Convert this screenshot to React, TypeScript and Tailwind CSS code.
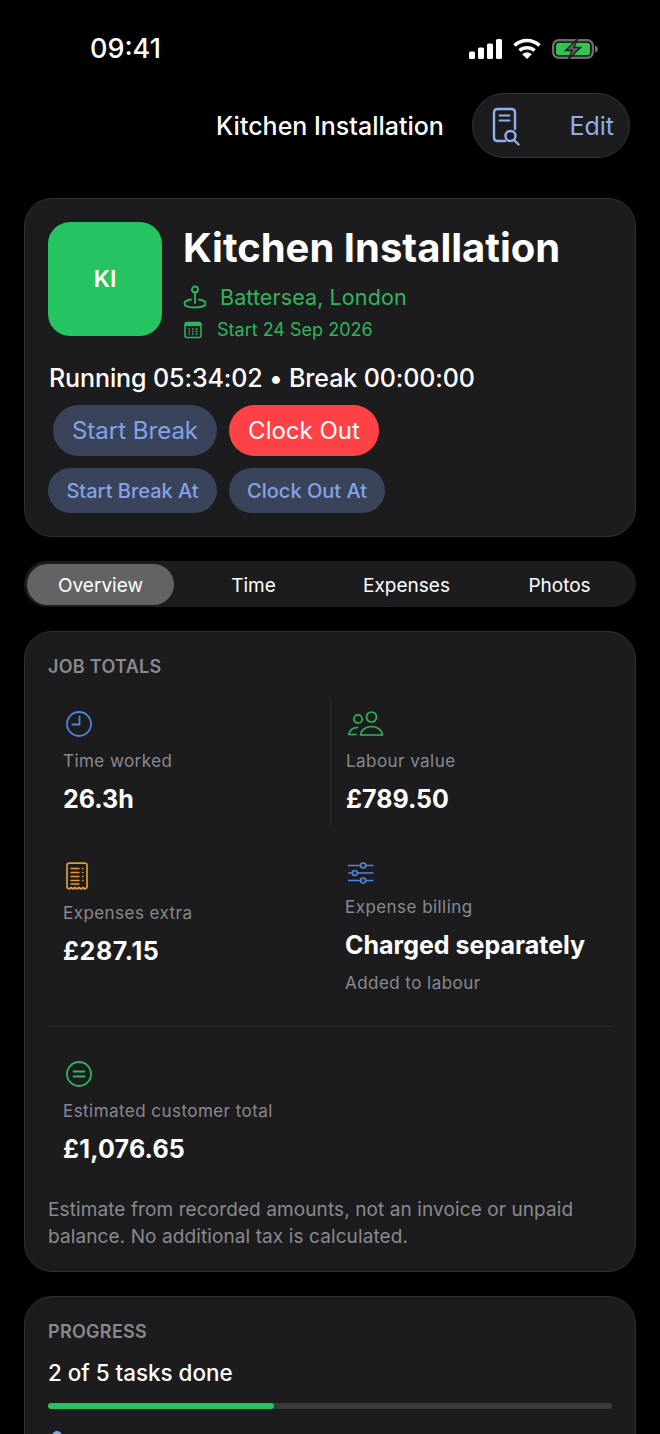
import React from 'react';

function Signal() {
  return (
    <svg width="33" height="20" viewBox="0 0 33 20" fill="white">
      <rect x="0" y="12.500" width="6" height="7.500" rx="1.500" />
      <rect x="9" y="8.500" width="6" height="11.500" rx="1.500" />
      <rect x="18" y="4.500" width="6" height="15.500" rx="1.500" />
      <rect x="27" y="0" width="6" height="20" rx="1.500" />
    </svg>
  );
}

function Wifi() {
  return (
    <svg width="28" height="21" viewBox="0 0 28 21" fill="none" stroke="white" strokeWidth="3.600">
      <path d="M1.500 7.500C8.500 0.800 19.500 0.800 26.500 7.500" />
      <path d="M6.500 12.500C10.800 8.800 17.200 8.800 21.500 12.500" />
      <path d="M14 21l-4.800-4.800c2.600-2.200 7-2.200 9.600 0z" fill="white" stroke="none" />
    </svg>
  );
}

function Battery() {
  return (
    <svg width="46" height="20" viewBox="0 0 46 20" fill="none">
      <rect x="1.200" y="1.200" width="39.600" height="17.600" rx="5.500" stroke="#6b6d6e" strokeWidth="2.400" />
      <rect x="4" y="3.800" width="34" height="12.400" rx="2.800" fill="#30c652" />
      <path d="M43 6.500v7c1.800-.5 3-1.900 3-3.500s-1.200-3-3-3.500z" fill="#6b6d6e" />
      <path d="M25.500 0L13.500 11.500H20L16.500 20L28.500 8.500H22z" fill="#5f6160" stroke="#1c1c1e" strokeWidth="1.400" />
    </svg>
  );
}

function DocSearch() {
  return (
    <svg width="32" height="40" viewBox="0 0 32 40" fill="none" stroke="#8fb0ee" strokeWidth="2.400" strokeLinecap="round">
      <path d="M13 34H5.500C3.500 34 2 32.500 2 30.500V5.500C2 3.500 3.500 2 5.500 2H19.500C21.500 2 23 3.500 23 5.500V22" />
      <path d="M7.500 8.500H17.500M7.500 13.500H17.500" strokeWidth="2" />
      <circle cx="18.500" cy="29" r="5" />
      <path d="M22 33l4.500 4.500" />
    </svg>
  );
}

function Pin() {
  return (
    <svg width="24" height="26" viewBox="0 0 24 26" fill="none" stroke="#2fb65c" strokeWidth="1.800" strokeLinecap="round">
      <circle cx="12" cy="5.500" r="3" />
      <path d="M12 8.500V19" />
      <path d="M8 15.500C4 16 1.500 17.500 1.500 19.500C1.500 22 6 23.500 12 23.500C18 23.500 22.500 22 22.500 19.500C22.500 17.500 20 16 16 15.500" />
    </svg>
  );
}

function CalendarGlyph() {
  return (
    <svg width="18" height="18" viewBox="0 0 18 18" fill="none">
      <rect x="1" y="1.500" width="16" height="15" rx="2" stroke="#2fb65c" strokeWidth="1.500" />
      <rect x="1" y="1.500" width="16" height="3.500" fill="#2fb65c" />
      <path d="M4.500 8h1.500M8 8h1.500M11.500 8h2M4.500 10.500h1.500M8 10.500h1.500M11.500 10.500h2M4.500 13h1.500M8 13h1.500M11.500 13h2" stroke="#2fb65c" strokeWidth="1.300" />
    </svg>
  );
}

function ClockIcon() {
  return (
    <svg width="28" height="28" viewBox="0 0 28 28" fill="none" stroke="#4f86dd" strokeWidth="1.800" strokeLinecap="round" strokeLinejoin="round">
      <circle cx="14" cy="14" r="12" />
      <path d="M14.500 6.500V14.500H7.500" />
    </svg>
  );
}

function PeopleIcon() {
  return (
    <svg width="36" height="26" viewBox="0 0 36 26" fill="none" stroke="#2fb65c" strokeWidth="1.700" strokeLinecap="round" strokeLinejoin="round">
      <circle cx="10" cy="8" r="4.200" />
      <circle cx="23.500" cy="6" r="5" />
      <path d="M1 23.500C1.500 19.500 4.500 16.500 9.500 16.500" />
      <path d="M1 23.500H8" />
      <path d="M12.500 24C13 19 17.500 15.500 23.500 15.500C29.500 15.500 34 19 34.500 24H12.500z" />
    </svg>
  );
}

function ReceiptIcon() {
  return (
    <svg width="24" height="28" viewBox="0 0 24 28" fill="none" stroke="#e0983f" strokeWidth="1.700" strokeLinecap="round" strokeLinejoin="round">
      <path d="M2 25.500V3.500C2 2.200 3 1.200 4.300 1.200H19.700C21 1.200 22 2.200 22 3.500V25.500L20 27L18 25.500L16 27L14 25.500L12 27L10 25.500L8 27L6 25.500L4 27z" />
      <path d="M6 6.500H14M6 10.500H14M6 14.500H14M6 18.500H14M6 22H14M17.500 6.500H18M17.500 10.500H18M17.500 14.500H18M17.500 18.500H18" strokeWidth="1.400" />
    </svg>
  );
}

function SlidersIcon() {
  return (
    <svg width="28" height="22" viewBox="0 0 28 22" fill="none" stroke="#4f86dd" strokeWidth="1.600">
      <path d="M1 3.500H13.500M19 3.500H26.500M1 11H5M10.500 11H26.500M1 18.500H13.500M19 18.500H26.500" />
      <circle cx="16.200" cy="3.500" r="2.500" />
      <circle cx="7.800" cy="11" r="2.500" />
      <circle cx="16.200" cy="18.500" r="2.500" />
    </svg>
  );
}

function EqualsIcon() {
  return (
    <svg width="28" height="28" viewBox="0 0 28 28" fill="none" stroke="#2fb65c" strokeWidth="1.800" strokeLinecap="round">
      <circle cx="14" cy="14" r="12" />
      <path d="M8.500 11.500H19.500M8.500 16.500H19.500" />
    </svg>
  );
}

function Stat({ icon, label, value, note, iconBox = 'h-[28px]', valueClass = '' }: { icon: React.ReactNode; label: string; value: string; note?: string; iconBox?: string; valueClass?: string }) {
  return (
    <div className="flex flex-col">
      <div className={`ml-[2px] flex items-center ${iconBox}`}>{icon}</div>
      <p className="mt-[11px] text-[17px] leading-[24px] tracking-[0.45px] text-[#8a8a8e]">{label}</p>
      <p className={`mt-[10px] text-[25px] leading-[32px] font-bold text-white ${valueClass}`}>{value}</p>
      {note && <p className="mt-[10px] text-[17px] leading-[24px] tracking-[0.45px] text-[#8a8a8e]">{note}</p>}
    </div>
  );
}

export default function App() {
  return (
    <div className="h-screen overflow-hidden bg-black font-['Inter',sans-serif] text-white">
      {/* status bar */}
      <div className="flex h-[93px] items-start justify-between pl-[90px] pr-[62px] pt-[32px]">
        <span className="text-[27px] leading-[34px] font-medium">09:41</span>
        <div className="flex items-center gap-[11px] pt-[6px]">
          <Signal />
          <Wifi />
          <Battery />
        </div>
      </div>

      {/* nav */}
      <div className="relative flex h-[65px] items-center justify-center">
        <span className="pt-[3px] text-[25px] font-medium">Kitchen Installation</span>
        <div className="absolute right-[30px] top-0 flex h-[65px] w-[158px] items-center justify-between rounded-full border border-[#333336] bg-[#1c1c1e] pl-[19px] pr-[15px] pt-[3px]">
          <DocSearch />
          <span className="text-[25px] text-[#8fb0ee]">Edit</span>
        </div>
      </div>

      <div className="flex flex-col gap-[24px] px-[24px] pt-[40px]">
        {/* job card */}
        <div className="h-[339px] rounded-[28px] border border-[#303033] bg-[#1c1c1e] px-[23px] pt-[23px]">
          <div className="flex gap-[21px]">
            <div className="flex h-[114px] w-[114px] shrink-0 items-center justify-center rounded-[22px] bg-[#25c460] pt-[1px] text-[23px] font-semibold">KI</div>
            <div className="flex flex-col pt-[1px]">
              <h1 className="text-[40px] leading-[50px] font-bold">Kitchen Installation</h1>
              <div className="mt-[9px] flex items-center gap-[13px] text-[21.500px] leading-[30px] tracking-[0.1px] text-[#2fb65c]">
                <Pin />
                <span>Battersea, London</span>
              </div>
              <div className="mt-[5px] flex items-center gap-[15px] pl-[1px] text-[18px] leading-[26px] text-[#2fb65c]">
                <CalendarGlyph />
                <span>Start 24 Sep 2026</span>
              </div>
            </div>
          </div>
          <p className="mt-[18px] pl-[1px] text-[25px] leading-[34px] font-medium tracking-[-0.1px]">Running 05:34:02 • Break 00:00:00</p>
          <div className="mt-[10px] flex gap-[12px] pl-[5px]">
            <button className="flex h-[51px] w-[164px] items-center justify-center rounded-full bg-[#394359] text-[24px] text-[#83a3e6]">Start Break</button>
            <button className="flex h-[51px] w-[150px] items-center justify-center rounded-full bg-[#ff4245] text-[24px] text-white">Clock Out</button>
          </div>
          <div className="mt-[12px] flex gap-[12px]">
            <button className="flex h-[45px] w-[169px] items-center justify-center rounded-full bg-[#394359] text-[20px] font-medium text-[#83a3e6]">Start Break At</button>
            <button className="flex h-[45px] w-[156px] items-center justify-center rounded-full bg-[#394359] text-[20px] font-medium text-[#83a3e6]">Clock Out At</button>
          </div>
        </div>

        {/* tabs */}
        <div className="flex h-[46px] items-start rounded-full bg-[#1c1c1e] p-[3px] text-[19px]">
          <div className="flex h-[41px] w-[147px] items-center justify-center rounded-full bg-[#636366] pt-[3px]">Overview</div>
          <div className="flex h-[41px] flex-1 items-center justify-center pl-[6px] pt-[3px]">Time</div>
          <div className="flex h-[41px] flex-1 items-center justify-center pl-[6px] pt-[3px]">Expenses</div>
          <div className="flex h-[41px] flex-1 items-center justify-center pl-[6px] pt-[3px]">Photos</div>
        </div>

        {/* totals */}
        <div className="h-[641px] rounded-[28px] border border-[#303033] bg-[#1c1c1e] px-[23px] pt-[23px]">
          <h2 className="text-[18px] leading-[24px] font-semibold tracking-[0.3px] text-[#8a8a8e]">JOB TOTALS</h2>
          <div className="mt-[20px] grid grid-cols-2 border-b border-[#2e2e31]">
            <div className="h-[153px] pl-[15px] pt-[11px]">
              <Stat icon={<ClockIcon />} label="Time worked" value="26.3h" />
            </div>
            <div className="h-[128px] border-l border-[#2e2e31] pl-[15px] pt-[11px]">
              <Stat icon={<PeopleIcon />} label="Labour value" value="£789.50" />
            </div>
            <div className="h-[174px] pl-[15px] pt-[10px]">
              <Stat icon={<ReceiptIcon />} label="Expenses extra" value="£287.15" valueClass="tracking-[0.6px]" />
            </div>
            <div className="-mt-[25px] h-[199px] pl-[15px] pt-[35px]">
              <Stat icon={<SlidersIcon />} label="Expense billing" value="Charged separately" note="Added to labour" iconBox="h-[22px]" />
            </div>
          </div>
          <div className="pl-[15px] pt-[33px]">
            <Stat icon={<EqualsIcon />} label="Estimated customer total" value="£1,076.65" valueClass="tracking-[0.2px]" />
          </div>
          <p className="mt-[31px] text-[19px] leading-[27px] tracking-[0.1px] text-[#8a8a8e]">Estimate from recorded amounts, not an invoice or unpaid balance. No additional tax is calculated.</p>
        </div>

        {/* progress */}
        <div className="rounded-[28px] border border-[#303033] bg-[#1c1c1e] px-[23px] pt-[23px] pb-[40px]">
          <h2 className="text-[18px] leading-[24px] font-semibold tracking-[0.3px] text-[#8a8a8e]">PROGRESS</h2>
          <p className="mt-[14px] text-[22.400px] leading-[30px] font-medium">2 of 5 tasks done</p>
          <div className="mt-[15px] h-[6px] rounded-full bg-[#3a3a3c]">
            <div className="h-full w-2/5 rounded-full bg-[#25c460]" />
          </div>
          <div className="ml-[4px] mt-[22px] h-[10px] w-[10px] rounded-full bg-[#83a3e6]" />
        </div>
      </div>
    </div>
  );
}
